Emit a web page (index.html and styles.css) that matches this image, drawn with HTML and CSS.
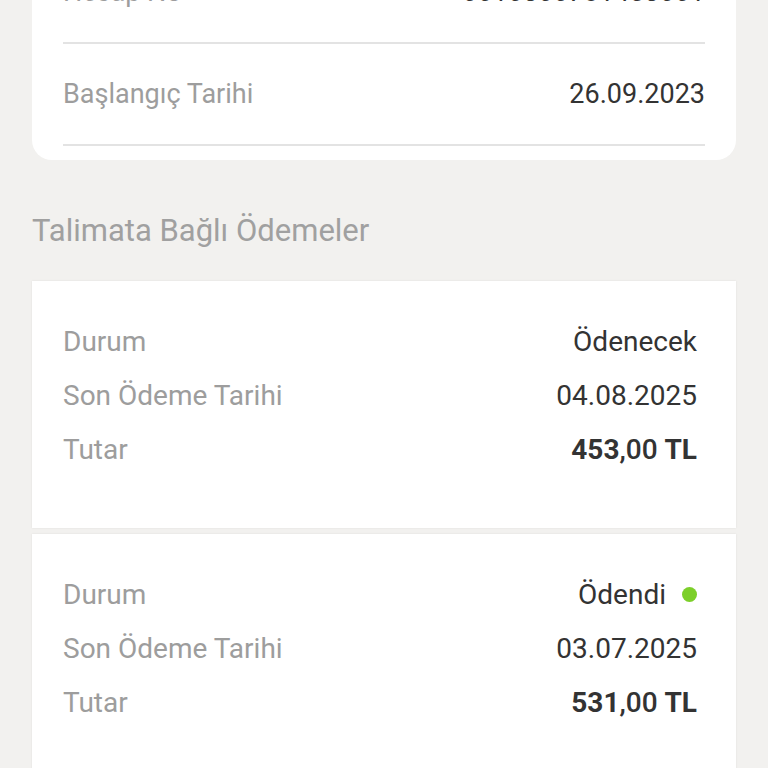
FILE: index.html
```html
<!DOCTYPE html>
<html lang="tr">
<head>
  <meta charset="UTF-8">
  <title>Talimat Detayı</title>
  <link rel="stylesheet" href="styles.css">
</head>
<body>
  <!-- Talimat bilgileri -->
  <div class="summary-card">
    <div class="info-row">
      <span class="label">Hesap No</span>
      <span class="value">0010300781453001</span>
    </div>
    <div class="info-row">
      <span class="label">Başlangıç Tarihi</span>
      <span class="value">26.09.2023</span>
    </div>
  </div>

  <h2 class="section-title">Talimata Bağlı Ödemeler</h2>

  <!-- Ödemeler listesi -->
  <div class="payment-card">
    <div class="pay-row">
      <span class="label">Durum</span>
      <span class="value">Ödenecek</span>
    </div>
    <div class="pay-row">
      <span class="label">Son Ödeme Tarihi</span>
      <span class="value">04.08.2025</span>
    </div>
    <div class="pay-row">
      <span class="label">Tutar</span>
      <span class="amount"><b>453</b><span class="decimals">,00</span> <b>TL</b></span>
    </div>
  </div>

  <div class="payment-card">
    <div class="pay-row">
      <span class="label">Durum</span>
      <span class="value status">Ödendi <i class="dot dot-paid"></i></span>
    </div>
    <div class="pay-row">
      <span class="label">Son Ödeme Tarihi</span>
      <span class="value">03.07.2025</span>
    </div>
    <div class="pay-row">
      <span class="label">Tutar</span>
      <span class="amount"><b>531</b><span class="decimals">,00</span> <b>TL</b></span>
    </div>
  </div>
</body>
</html>
```

FILE: styles.css
```css
body {
  margin: 0;
  background-color: #f2f1ef;
  font-family: Roboto, "Noto Sans", sans-serif;
  color: #333;
}
.summary-card {
  margin: -58px 32px 0;
  padding: 0 31px 14px;
  background-color: #fff;
  border-radius: 0 0 20px 20px;
}
.info-row {
  display: flex;
  justify-content: space-between;
  align-items: center;
  height: 100px;
  border-bottom: 2px solid #e3e3e3;
}
.info-row .label,
.info-row .value {
  font-size: 27px;
}
.label {
  font-size: 28px;
  color: #9d9d9d;
}
.value {
  font-size: 28px;
  color: #333;
}
.section-title {
  margin: 54px 0 33px;
  padding-left: 32px;
  font-size: 31px;
  line-height: 34px;
  font-weight: 400;
  color: #a0a0a0;
}
.payment-card {
  margin: 0 32px 6px;
  padding: 33px 39px 52px 31px;
  background-color: #fff;
  box-shadow: 0 0 2px rgba(0, 0, 0, 0.08);
}
.pay-row {
  display: flex;
  justify-content: space-between;
  align-items: center;
  height: 54px;
}
.amount {
  font-size: 28px;
  color: #333;
}
.amount b {
  font-weight: 700;
}
.decimals {
  font-weight: 500;
}
.status {
  display: flex;
  align-items: center;
  gap: 16px;
}
.dot {
  display: inline-block;
  width: 15px;
  height: 15px;
  border-radius: 50%;
}
.dot-paid {
  background-color: #7ccf2a;
}
```
